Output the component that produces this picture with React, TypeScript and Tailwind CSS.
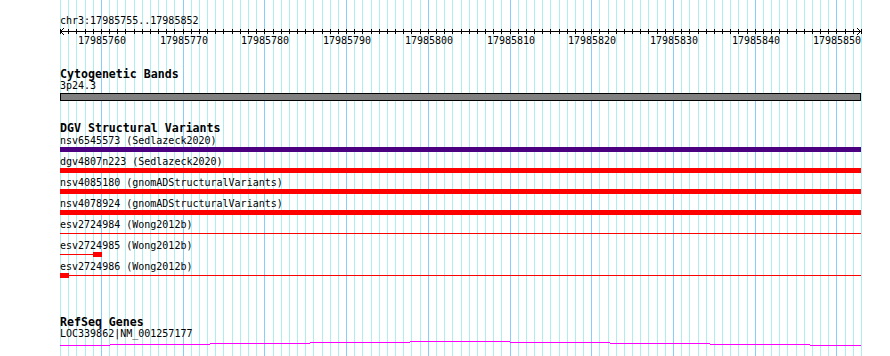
import React from 'react';

// 98 bp drawn across 801 px, first base at x=60
const X0 = 60;
const BP = 98;
const W = 801;
const pos = (i: number) => Math.round((i * W) / BP);

function Grid() {
  const lines = [];
  for (let i = 0; i <= BP; i++) {
    const x = X0 + pos(i) + 0.5;
    lines.push(
      <line
        key={i}
        x1={x}
        x2={x}
        y1={0}
        y2={356}
        stroke={i % 10 === 5 ? '#87cefa' : '#afeeee'}
        strokeWidth={1}
      />
    );
  }
  return (
    <svg className="absolute inset-0" width={890} height={356} shapeRendering="crispEdges">
      {lines}
    </svg>
  );
}

function Ruler() {
  const ticks = [];
  const labels = [];
  for (let i = 0; i <= BP; i++) {
    const x = pos(i) + 0.5;
    ticks.push(<line key={i} x1={x} x2={x} y1={3} y2={8} stroke="#000" strokeWidth={1} />);
    if (i % 10 === 5) {
      labels.push(
        <text
          key={'t' + i}
          x={pos(i) + 1}
          y={18}
          textAnchor="middle"
          fontSize={10}
          fontFamily="'DejaVu Sans Mono', monospace"
          fill="#000"
        >
          {17985755 + i}
        </text>
      );
    }
  }
  return (
    <svg width={802} height={20} className="block">
      <g shapeRendering="crispEdges">
        <line x1={0} x2={W} y1={5.5} y2={5.5} stroke="#000" strokeWidth={1} />
        {ticks}
      </g>
      <polyline points="4,2 0.5,5.5 4,9" fill="none" stroke="#000" strokeWidth={1} />
      <polyline points="797,2 800.5,5.5 797,9" fill="none" stroke="#000" strokeWidth={1} />
      {labels}
    </svg>
  );
}

function TrackLabel({ children, className = '' }: { children: React.ReactNode; className?: string }) {
  return <div className={`h-[12px] text-[11.6px] leading-[12px] font-bold whitespace-nowrap ${className}`}>{children}</div>;
}

function Text({ children, className = '' }: { children: React.ReactNode; className?: string }) {
  return <div className={`h-[10px] text-[10px] leading-[10px] whitespace-nowrap ${className}`}>{children}</div>;
}

type Feat = {
  label: string;
  kind: 'bar' | 'line' | 'lineBox' | 'boxLine';
  color: string;
};

const variants: Feat[] = [
  { label: 'nsv6545573 (Sedlazeck2020)', kind: 'bar', color: 'bg-[#4b0082]' },
  { label: 'dgv4807n223 (Sedlazeck2020)', kind: 'bar', color: 'bg-[#ff0000]' },
  { label: 'nsv4085180 (gnomADStructuralVariants)', kind: 'bar', color: 'bg-[#ff0000]' },
  { label: 'nsv4078924 (gnomADStructuralVariants)', kind: 'bar', color: 'bg-[#ff0000]' },
  { label: 'esv2724984 (Wong2012b)', kind: 'line', color: 'bg-[#ff0000]' },
  { label: 'esv2724985 (Wong2012b)', kind: 'lineBox', color: 'bg-[#ff0000]' },
  { label: 'esv2724986 (Wong2012b)', kind: 'boxLine', color: 'bg-[#ff0000]' },
];

function Glyph({ f }: { f: Feat }) {
  if (f.kind === 'bar') return <div className={`h-[5px] w-[801px] ${f.color}`} />;
  if (f.kind === 'line')
    return (
      <div className="h-[5px] w-[801px]">
        <div className={`mt-[2px] h-[1px] w-[801px] ${f.color}`} />
      </div>
    );
  if (f.kind === 'lineBox')
    return (
      <div className="h-[5px] flex items-start">
        <div className={`mt-[2px] h-[1px] w-[33px] ${f.color}`} />
        <div className={`h-[5px] w-[9px] ${f.color}`} />
      </div>
    );
  return (
    <div className="h-[5px] w-[801px] flex items-start">
      <div className={`h-[5px] w-[9px] ${f.color}`} />
      <div className={`mt-[2px] h-[1px] w-[792px] ${f.color}`} />
    </div>
  );
}

function GeneLine() {
  // stepped rendering of the transcript line
  const steps = [
    [0, 50, 6],
    [50, 150, 5],
    [150, 250, 4],
    [250, 350, 3],
    [350, 450, 2],
    [450, 550, 3],
    [550, 650, 4],
    [650, 750, 5],
    [750, 801, 6],
  ];
  return (
    <svg width={801} height={8} className="block" shapeRendering="crispEdges">
      {steps.map(([a, b, y]) => (
        <line key={a} x1={a} x2={b} y1={y + 0.5} y2={y + 0.5} stroke="#ff00ff" strokeWidth={1} />
      ))}
    </svg>
  );
}

export default function App() {
  return (
    <div className="relative w-[890px] h-[356px] overflow-hidden bg-white text-black font-['DejaVu_Sans_Mono',monospace]">
      <Grid />
      <div className="relative flex flex-col pl-[60px] pt-[16px] w-[861px]">
        <Text>chr3:17985755..17985852</Text>
        <Ruler />

        <TrackLabel className="mt-[22px]">Cytogenetic Bands</TrackLabel>
        <Text className="mt-[1px]">3p24.3</Text>
        <div className="mt-[2px] h-[8px] w-[801px] border border-black bg-[#808080]" />

        <TrackLabel className="mt-[21px]">DGV Structural Variants</TrackLabel>
        <div className="mt-[2px] flex flex-col">
          {variants.map((f) => (
            <div key={f.label} className="h-[21px] flex flex-col">
              <Text>{f.label}</Text>
              <div className="mt-[1px]">
                <Glyph f={f} />
              </div>
            </div>
          ))}
        </div>

        <TrackLabel className="mt-[33px]">RefSeq Genes</TrackLabel>
        <Text className="mt-[1px]">LOC339862|NM_001257177</Text>
        <GeneLine />
      </div>
    </div>
  );
}
